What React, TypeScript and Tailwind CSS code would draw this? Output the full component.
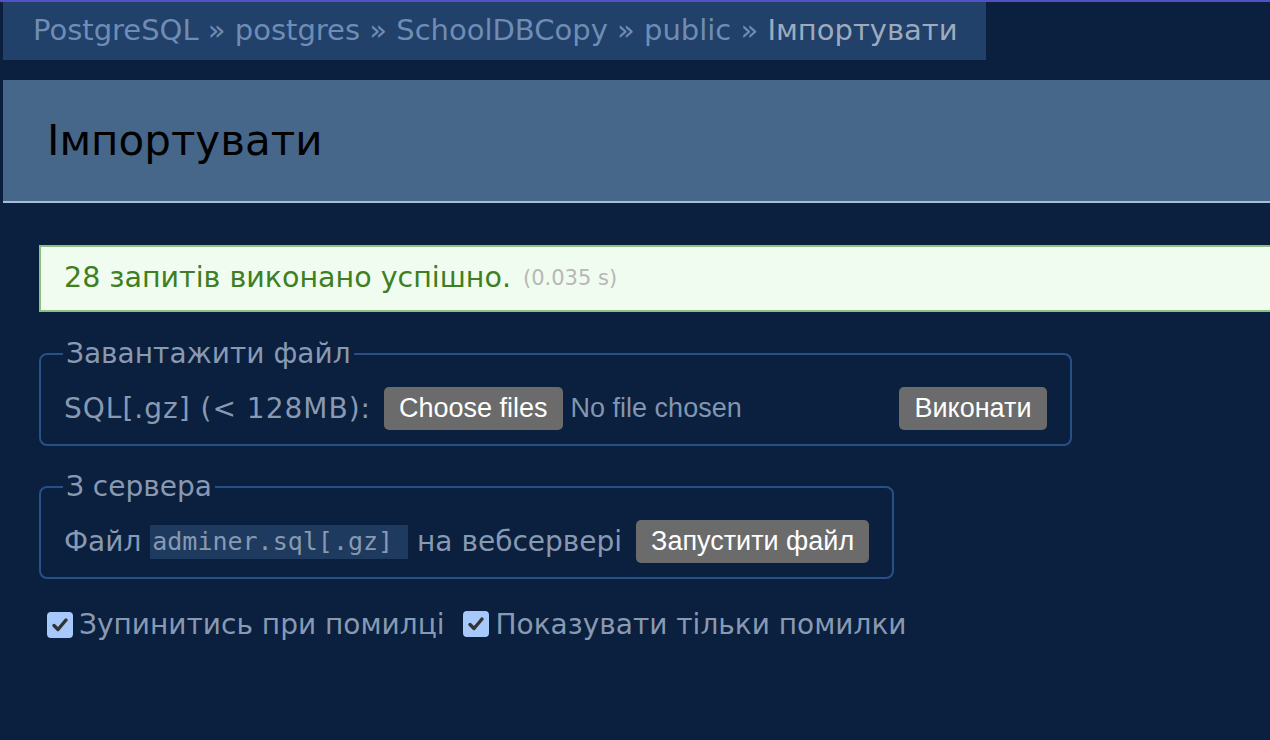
import React from "react";

const Check = () => (
  <span className="inline-flex w-[26px] h-[26px] rounded-[4px] bg-[#a6c8fb] items-center justify-center shrink-0">
    <svg width="20" height="20" viewBox="0 0 20 20">
      <path d="M4 10.5 L8 14.5 L16 5" stroke="#333333" strokeWidth="3.4" fill="none" strokeLinecap="round" strokeLinejoin="round" />
    </svg>
  </span>
);

export default function App() {
  return (
    <div className="min-h-[740px] w-[1270px] overflow-hidden bg-[#0b1f3e] font-['DejaVu_Sans',sans-serif]">
      <div className="h-[2px] bg-[#5252c6]" />
      <div className="ml-[3px] w-[983px] h-[58px] bg-[#21406a] flex items-center pl-[30px] text-[29px] text-[#6f8db4] whitespace-pre">
        <span>PostgreSQL » postgres » SchoolDBCopy » public » </span>
        <span className="text-[#9eabbd]">Імпортувати</span>
      </div>
      <div className="mt-[20px] ml-[3px] h-[123px] bg-[#47678a] border-b-2 border-[#a7bdd8] flex items-center pl-[44px]">
        <h2 className="text-[42px] text-black">Імпортувати</h2>
      </div>
      <div className="mt-[42px] ml-[39px] h-[67px] bg-[#f1fcf0] border-2 border-r-0 border-[#8cbf82] flex items-center pl-[23px] whitespace-nowrap">
        <span className="text-[28.5px] text-[#3d7f22]">28 запитів виконано успішно.</span>
        <span className="ml-[12px] text-[21px] text-[#b7b7b7]">(0.035 s)</span>
      </div>
      <fieldset className="mt-[25px] ml-[39px] w-[1032px] border-2 border-[#275089] rounded-[8px] px-[23px] pb-[14px]">
        <legend className="px-[3px] -ml-[1px] text-[28px] text-[#8899b2] leading-[34px]">Завантажити файл</legend>
        <div className="flex items-center text-[28px] text-[#8899b2] h-[43px] mt-[16px] whitespace-nowrap">
          <span className="tracking-[1px]">SQL[.gz] (&lt; 128MB):</span>
          <div className="ml-[13px] w-[507px] flex items-center font-['Liberation_Sans',sans-serif]">
            <span className="h-[43px] px-[15px] rounded-[5px] bg-[#6b6b6b] text-white text-[27px] flex items-center">Choose files</span>
            <span className="ml-[8px] text-[27px] text-[#8196b0]">No file chosen</span>
          </div>
          <span className="ml-[8px] h-[43px] px-[15.5px] rounded-[5px] bg-[#6b6b6b] text-white text-[27px] flex items-center font-['Liberation_Sans',sans-serif]">Виконати</span>
        </div>
      </fieldset>
      <fieldset className="mt-[24px] ml-[39px] w-[853px] border-2 border-[#275089] rounded-[8px] px-[23px] pb-[14px]">
        <legend className="px-[3px] -ml-[1px] text-[28px] text-[#8899b2] leading-[34px]">З сервера</legend>
        <div className="flex items-center text-[28px] text-[#8899b2] h-[43px] mt-[16px] whitespace-pre">
          <span>Файл </span>
          <code className="bg-[#1e3a5e] pl-[2px] font-['DejaVu_Sans_Mono',monospace] text-[25px] leading-[34px]">adminer.sql[.gz] </code>
          <span> на вебсервері</span>
          <span className="ml-[14px] h-[43px] px-[15px] rounded-[5px] bg-[#6b6b6b] text-white text-[27px] flex items-center font-['Liberation_Sans',sans-serif]">Запустити файл</span>
        </div>
      </fieldset>
      <div className="mt-[29px] ml-[47px] h-[34px] flex items-center text-[28px] text-[#8899b2] whitespace-nowrap">
        <Check />
        <span className="ml-[6px]">Зупинитись при помилці</span>
        <span className="ml-[18px]"><Check /></span>
        <span className="ml-[7px]">Показувати тільки помилки</span>
      </div>
    </div>
  );
}
